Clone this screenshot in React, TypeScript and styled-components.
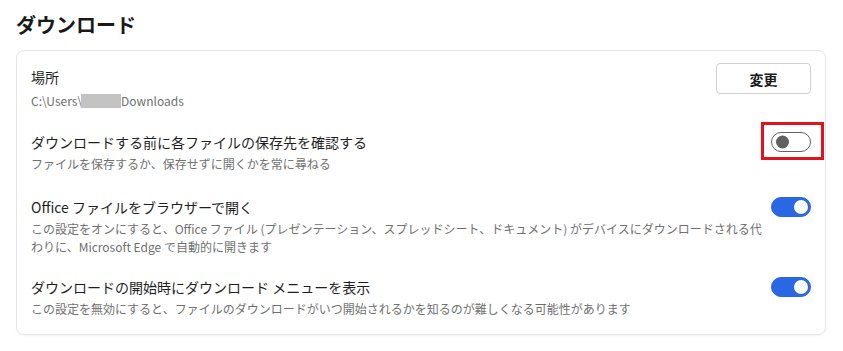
import React from 'react';
import styled, {createGlobalStyle} from 'styled-components';

const GlobalStyle = createGlobalStyle`
  html, body {
    margin: 0;
    padding: 0;
    background: #ffffff;
  }
  body {
    font-family: 'Noto Sans CJK JP', 'Noto Sans', sans-serif;
    color: #1b1b1b;
  }
`;

const Page = styled.div`
  padding: 11px 17px 16px 16px;
`;

const Heading = styled.h1`
  margin: 0 0 11px;
  font-size: 20px;
  line-height: 28px;
  font-weight: 700;
  color: #1a1a1a;
`;

const Card = styled.section`
  border: 1px solid #e6e6e6;
  border-radius: 8px;
  box-shadow: 0 1px 2px rgba(0, 0, 0, 0.06);
  padding: 4px 0 4px;
`;

const Row = styled.div<{pb?: number}>`
  display: flex;
  align-items: flex-start;
  justify-content: space-between;
  padding: 12px 14px ${p => p.pb ?? 12}px;
`;

const TextBlock = styled.div`
  display: flex;
  flex-direction: column;
  min-width: 0;
`;

const Title = styled.div`
  font-size: 14px;
  line-height: 20px;
  color: #1f1f1f;
`;

const Desc = styled.div<{gap?: number}>`
  margin-top: ${p => p.gap ?? 3}px;
  font-size: 12px;
  line-height: 18px;
  color: #707070;
  white-space: nowrap;
`;

const Redacted = styled.span`
  display: inline-block;
  width: 40px;
  height: 14px;
  margin-left: -1px;
  vertical-align: -2px;
  background: #c3c3c3;
`;

const Button = styled.button`
  margin-top: -4px;
  width: 95px;
  height: 31px;
  border: 1px solid #d1d1d1;
  border-radius: 4px;
  background: #ffffff;
  font-family: inherit;
  font-size: 14px;
  font-weight: 700;
  color: #1a1a1a;
  cursor: pointer;
`;

const ToggleWrap = styled.div`
  position: relative;
  flex-shrink: 0;
  margin-left: 16px;
`;

const Track = styled.div<{on: boolean}>`
  box-sizing: border-box;
  width: 40px;
  height: 20px;
  border-radius: 10px;
  border: 1px solid ${p => (p.on ? '#2a67e3' : '#616161')};
  background: ${p => (p.on ? '#2a67e3' : '#ffffff')};
  position: relative;
`;

const Knob = styled.span<{on: boolean}>`
  position: absolute;
  top: 50%;
  left: ${p => (p.on ? '22px' : '4px')};
  width: ${p => (p.on ? '14px' : '13px')};
  height: ${p => (p.on ? '14px' : '13px')};
  transform: translateY(-50%);
  border-radius: 50%;
  background: ${p => (p.on ? '#ffffff' : '#616161')};
`;

const Highlight = styled.span`
  position: absolute;
  box-sizing: border-box;
  top: -10px;
  left: -10px;
  width: 63px;
  height: 38px;
  border: 3px solid #e3121e;
  pointer-events: none;
`;

const Toggle: React.FC<{on: boolean; highlight?: boolean}> = ({on, highlight}) => (
  <ToggleWrap>
    <Track on={on}>
      <Knob on={on} />
    </Track>
    {highlight && <Highlight />}
  </ToggleWrap>
);

export default function App() {
  return (
    <>
      <GlobalStyle />
      <Page>
        <Heading>ダウンロード</Heading>
        <Card>
          <Row pb={10}>
            <TextBlock>
              <Title>場所</Title>
              <Desc gap={5}>
                C:\Users\
                <Redacted />
                Downloads
              </Desc>
            </TextBlock>
            <Button>変更</Button>
          </Row>
          <Row>
            <TextBlock>
              <Title>ダウンロードする前に各ファイルの保存先を確認する</Title>
              <Desc>ファイルを保存するか、保存せずに開くかを常に尋ねる</Desc>
            </TextBlock>
            <Toggle on={false} highlight />
          </Row>
          <Row pb={9}>
            <TextBlock>
              <Title>Office ファイルをブラウザーで開く</Title>
              <Desc>
                この設定をオンにすると、Office ファイル (プレゼンテーション、スプレッドシート、ドキュメント) がデバイスにダウンロードされる代
                <br />
                わりに、Microsoft Edge で自動的に開きます
              </Desc>
            </TextBlock>
            <Toggle on />
          </Row>
          <Row>
            <TextBlock>
              <Title>ダウンロードの開始時にダウンロード メニューを表示</Title>
              <Desc>この設定を無効にすると、ファイルのダウンロードがいつ開始されるかを知るのが難しくなる可能性があります</Desc>
            </TextBlock>
            <Toggle on />
          </Row>
        </Card>
      </Page>
    </>
  );
}
